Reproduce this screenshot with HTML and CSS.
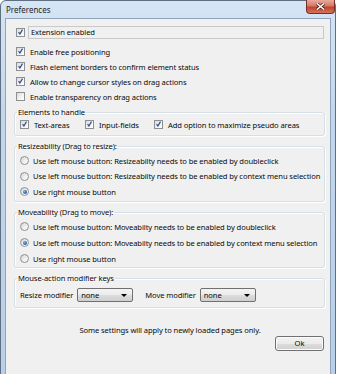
FILE: index.html
```html
<!DOCTYPE html>
<html lang="en">
<head>
    <meta charset="UTF-8">
    <title>Preferences</title>
    <link rel="stylesheet" href="styles.css">
</head>
<body>

    <div class="window">
        <div class="titlebar">
            <span class="title">Preferences</span>
            <span class="close">
                <svg width="9" height="7" viewBox="0 0 9 7">
                    <path d="M1 0.5 L8 6.5 M8 0.5 L1 6.5" stroke="#4a1a14" stroke-width="3"/>
                    <path d="M1 0.5 L8 6.5 M8 0.5 L1 6.5" stroke="#fff" stroke-width="1.6"/>
                </svg>
            </span>
        </div>
        <div class="client">
            <div class="ext-row">
                <span class="cb checked"></span>
                <span class="ext-field">Extension enabled</span>
            </div>

            <div class="opts">
                <div class="row"><span class="cb checked"></span>Enable free positioning</div>
                <div class="row"><span class="cb checked"></span>Flash element borders to confirm element status</div>
                <div class="row"><span class="cb checked"></span>Allow to change cursor styles on drag actions</div>
                <div class="row"><span class="cb"></span>Enable transparency on drag actions</div>
            </div>

            <fieldset class="group elements">
                <legend>Elements to handle</legend>
                <div class="inline">
                    <div class="row w-text"><span class="cb checked"></span>Text-areas</div>
                    <div class="row w-input"><span class="cb checked"></span>Input-fields</div>
                    <div class="row"><span class="cb checked"></span>Add option to maximize pseudo areas</div>
                </div>
            </fieldset>

            <fieldset class="group radios">
                <legend>Resizeability (Drag to resize):</legend>
                <div class="row"><span class="rb"></span>Use left mouse button: Resizeabilty needs to be enabled by doubleclick</div>
                <div class="row"><span class="rb"></span>Use left mouse button: Resizeabilty needs to be enabled by context menu selection</div>
                <div class="row"><span class="rb selected"></span>Use right mouse button</div>
            </fieldset>

            <fieldset class="group radios">
                <legend>Moveability (Drag to move):</legend>
                <div class="row"><span class="rb"></span>Use left mouse button: Moveabilty needs to be enabled by doubleclick</div>
                <div class="row"><span class="rb selected"></span>Use left mouse button: Moveabilty needs to be enabled by context menu selection</div>
                <div class="row"><span class="rb"></span>Use right mouse button</div>
            </fieldset>

            <fieldset class="group mouse">
                <legend>Mouse-action modifier keys</legend>
                <div class="modifiers">
                    <span class="mod-label">Resize modifier</span>
                    <span class="select">none<span class="arrow"></span></span>
                    <span class="mod-label move">Move modifier</span>
                    <span class="select">none<span class="arrow"></span></span>
                </div>
            </fieldset>

            <p class="note">Some settings will apply to newly loaded pages only.</p>

            <div class="actions">
                <span class="button">Ok</span>
            </div>
        </div>
    </div>

</body>
</html>
```

FILE: styles.css
```css
body {
    margin: 0;
    padding: 0;
    background-color: #fff;
    font-family: "Noto Sans", "Open Sans", sans-serif;
    font-size: 7.6px;
    letter-spacing: -0.1px;
    color: #0a0a0a;
}
.window {
    height: 371px;
    width: 326px;
    padding: 0 4px 4px 4px;
    border: 1px solid #5f6f82;
    border-radius: 6px 6px 2px 2px;
    background: linear-gradient(180deg, #d6e5f4 0%, #c3d7ec 30%, #b9cfe7 100%);
}
.titlebar {
    height: 17px;
    display: flex;
    align-items: flex-start;
    justify-content: space-between;
}
.title {
    margin-top: 3px;
    margin-left: 1px;
    font-size: 8px;
    letter-spacing: 0;
    color: #1e1e1e;
}
.close {
    width: 27px;
    height: 13px;
    margin-top: -1px;
    margin-right: -4px;
    display: flex;
    align-items: center;
    justify-content: center;
    border: 1px solid #7a2d24;
    border-top: none;
    border-radius: 0 0 4px 4px;
    background: linear-gradient(180deg, #e9a99c 0%, #d47a68 45%, #c0432c 55%, #d3735b 100%);
}
.client {
    height: 348px;
    border: 1px solid #8fa4bd;
    background-color: #f0f0f0;
    padding: 7px 5px 0 9px;
}
.cb {
    display: inline-block;
    width: 7px;
    height: 7px;
    margin-right: 5px;
    border: 1px solid #8e8f8f;
    background: linear-gradient(135deg, #d9dadb 0%, #f4f4f4 60%, #fff 100%);
    flex-shrink: 0;
    position: relative;
}
.cb.checked::after {
    content: "";
    position: absolute;
    left: 1px;
    top: 0px;
    width: 5px;
    height: 6px;
    background: url("data:image/svg+xml;utf8,<svg xmlns='http://www.w3.org/2000/svg' width='5' height='6' viewBox='0 0 5 6'><path d='M0.6 3.2 L1.9 5 L4.5 0.6' fill='none' stroke='%23304c8c' stroke-width='1.2'/></svg>") no-repeat;
}
.rb {
    display: inline-block;
    width: 7px;
    height: 7px;
    margin-right: 4px;
    border: 1px solid #8e8f8f;
    border-radius: 50%;
    background: linear-gradient(135deg, #d4d5d6 0%, #f2f2f2 60%, #fff 100%);
    flex-shrink: 0;
    position: relative;
}
.rb.selected::after {
    content: "";
    position: absolute;
    left: 1.5px;
    top: 1.5px;
    width: 4px;
    height: 4px;
    border-radius: 50%;
    background: radial-gradient(circle at 35% 35%, #7fb8ee 0%, #2a6fc0 50%, #173f7a 100%);
}
.ext-row {
    display: flex;
    align-items: center;
    height: 13px;
    margin-left: 1px;
}
.ext-row .cb {
    margin-right: 3px;
}
.ext-field {
    flex: 1;
    height: 11px;
    line-height: 11px;
    padding-left: 2px;
    border: 1px solid #c9c9c9;
    margin-right: 1px;
}
.opts {
    margin-top: 5px;
    margin-left: 1px;
}
.row {
    display: flex;
    align-items: center;
    height: 15px;
    white-space: nowrap;
}
.group {
    margin: 0 0 0 -1px;
    padding: 0 0 2px 5px;
    border: 1px solid #d5dfe5;
    border-radius: 3px;
    box-shadow: inset 1px 1px 0 #fff, 1px 1px 0 #fff;
}
.group legend {
    padding: 0 1px;
    margin-left: -3px;
    line-height: 11px;
}
.group + .group {
    margin-top: 5px;
}
.elements {
    margin-top: 3px;
    padding-bottom: 3px;
}
.inline {
    display: flex;
    margin-top: -1px;
}
.w-text {
    width: 65px;
}
.w-input {
    width: 69px;
}
.radios {
    padding-bottom: 1px;
}
.radios .row {
    height: 15.5px;
}
.radios legend + .row {
    margin-top: 1px;
}
.radios + .radios .row {
    height: 16px;
}
.radios + .radios {
    padding-bottom: 0;
}
.mouse {
    margin-top: 6px;
}
.modifiers {
    display: flex;
    align-items: center;
    height: 15px;
    margin: 4px 0 2px 0;
}
.mod-label {
    margin-right: 4px;
}
.mod-label.move {
    margin-left: 12px;
}
.select {
    position: relative;
    width: 51px;
    height: 12px;
    line-height: 12px;
    padding-left: 3px;
    border: 1px solid #707070;
    border-radius: 2px;
    background: linear-gradient(180deg, #f3f3f3 0%, #ebebeb 50%, #dddddd 51%, #cfcfcf 100%);
}
.arrow {
    position: absolute;
    right: 5px;
    top: 5px;
    border-left: 3px solid transparent;
    border-right: 3px solid transparent;
    border-top: 3px solid #000;
}
.note {
    margin: 17px 0 0 0;
    text-align: center;
    height: 11px;
    line-height: 11px;
}
.actions {
    display: flex;
    justify-content: flex-end;
    margin-top: 0;
}
.button {
    width: 47px;
    height: 13px;
    line-height: 13px;
    text-align: center;
    border: 1px solid #707070;
    border-radius: 3px;
    background: linear-gradient(180deg, #f2f2f2 0%, #ebebeb 50%, #dddddd 51%, #cfcfcf 100%);
    box-shadow: inset 0 0 0 1px #fbfbfb;
    margin-right: 1px;
}
```
